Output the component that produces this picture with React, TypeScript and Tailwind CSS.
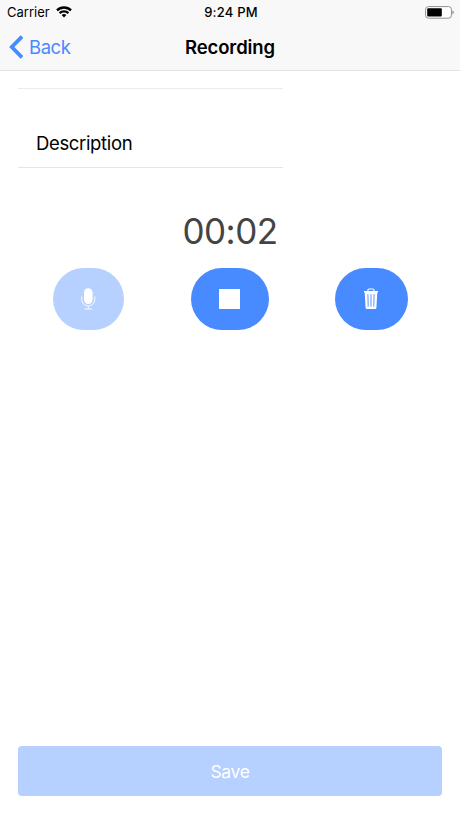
import type { ReactNode } from 'react';

interface RoundButtonProps {
  label: string;
  className: string;
  children: ReactNode;
}

function RoundButton({ label, className, children }: RoundButtonProps) {
  return (
    <button
      type="button"
      aria-label={label}
      className={`flex h-[62px] items-center justify-center rounded-full text-white ${className}`}
    >
      {children}
    </button>
  );
}

function WifiIcon() {
  return (
    <svg width="16" height="12" viewBox="0 0 16 12" fill="none" stroke="currentColor" strokeWidth="2.4">
      <path d="M1 4.3a10 10 0 0 1 14 0" />
      <path d="M3.6 7.2a6.3 6.3 0 0 1 8.8 0" />
      <path d="M8 11.6 5.6 9.1a3.5 3.5 0 0 1 4.8 0Z" fill="currentColor" stroke="none" />
    </svg>
  );
}

function BatteryIcon() {
  return (
    <svg width="29" height="13" viewBox="0 0 29 13">
      <rect x="0.6" y="0.6" width="25.8" height="11.6" rx="2.8" fill="#fff" stroke="#8e8e8e" />
      <rect x="2.2" y="2.2" width="14.6" height="8.4" rx="1" fill="#000" />
      <path d="M27.5 4.6c1.6.6 1.6 3 0 3.6Z" fill="#777" />
    </svg>
  );
}

function MicIcon() {
  return (
    <svg width="16" height="22" viewBox="0 0 16 22" fill="none" stroke="currentColor">
      <rect x="4" y="0.2" width="8.6" height="15.8" rx="4.3" fill="currentColor" stroke="none" />
      <path d="M1.7 8.4v3a6.6 6.6 0 0 0 13.2 0v-3M8.3 18v3M4.3 21h8" strokeWidth="0.9" />
    </svg>
  );
}

function TrashIcon() {
  return (
    <svg width="16" height="22" viewBox="0 0 16 22" fill="none">
      <path d="M4.9 3.3V2.2q0-1.2 1.2-1.2h3.8q1.2 0 1.2 1.2v1.1" stroke="#fff" strokeWidth="1.1" />
      <path d="M1 3.1h14v1.5h-.7l-.9 15.2q-.1 1.2-1.3 1.2H3.9q-1.2 0-1.3-1.2L1.7 4.6H1Z" fill="#fff" />
      <path d="m4.9 6.2.3 12.5M8 6.2v12.5M11.1 6.2l-.3 12.5" stroke="#488aff" strokeWidth="0.9" />
    </svg>
  );
}

export default function App() {
  return (
    <div className="flex h-[818px] w-[460px] flex-col bg-white font-[Inter,sans-serif] text-black">
      <header className="h-[71px] border-b border-[#e2e2e2] bg-[#f8f8f8]">
        <div className="grid h-6 grid-cols-3 items-center pr-1.5 pl-[7px] text-[13px]">
          <div className="flex items-center gap-1.5">
            <span className="pt-px">Carrier</span>
            <WifiIcon />
          </div>
          <span className="pt-px pl-px text-center font-medium tracking-[0.2px]">9:24 PM</span>
          <div className="flex justify-end">
            <BatteryIcon />
          </div>
        </div>
        <div className="grid h-[46px] grid-cols-3 items-center pr-[9px] pl-[9px]">
          <button
            type="button"
            className="flex items-center gap-[6px] text-[18.5px] tracking-[-0.45px] text-[#488aff]"
          >
            <svg width="14" height="24" viewBox="0 0 14 24" fill="none">
              <path d="M13 1.6 2.8 12 13 22.4" stroke="currentColor" strokeWidth="3.8" />
            </svg>
            <span className="pt-px">Back</span>
          </button>
          <h1 className="pt-px text-center text-[18.5px] font-semibold tracking-[-0.1px]">Recording</h1>
        </div>
      </header>

      <main className="flex flex-1 flex-col px-[18px] pb-[22px]">
        <div className="h-[18px] w-[265px] border-b border-[#ebebeb]" />
        <div className="flex h-[79px] w-[265px] items-end border-b border-[#e5e5e5] pb-[9px] pl-[18px] text-[18.5px] tracking-[-0.35px]">
          Description
        </div>

        <div className="mt-[41px] text-center text-[35px] leading-[44px] tracking-[-0.5px] text-[#444]">
          00:02
        </div>

        <div className="mt-[15px] flex justify-between pr-[34px] pl-[35px]">
          <RoundButton label="Record" className="w-[71px] bg-[#b6d0ff] pr-px pb-px">
            <MicIcon />
          </RoundButton>
          <RoundButton label="Stop" className="w-[78px] bg-[#488aff] pb-px">
            <span className="h-5 w-[20.5px] bg-white" />
          </RoundButton>
          <RoundButton label="Delete" className="w-[73px] bg-[#488aff] pr-px pb-px">
            <TrashIcon />
          </RoundButton>
        </div>

        <button
          type="button"
          className="mt-auto h-[50px] rounded bg-[#b6d0ff] pt-0.5 text-[17.5px] tracking-[-0.35px] text-white"
        >
          Save
        </button>
      </main>
    </div>
  );
}
